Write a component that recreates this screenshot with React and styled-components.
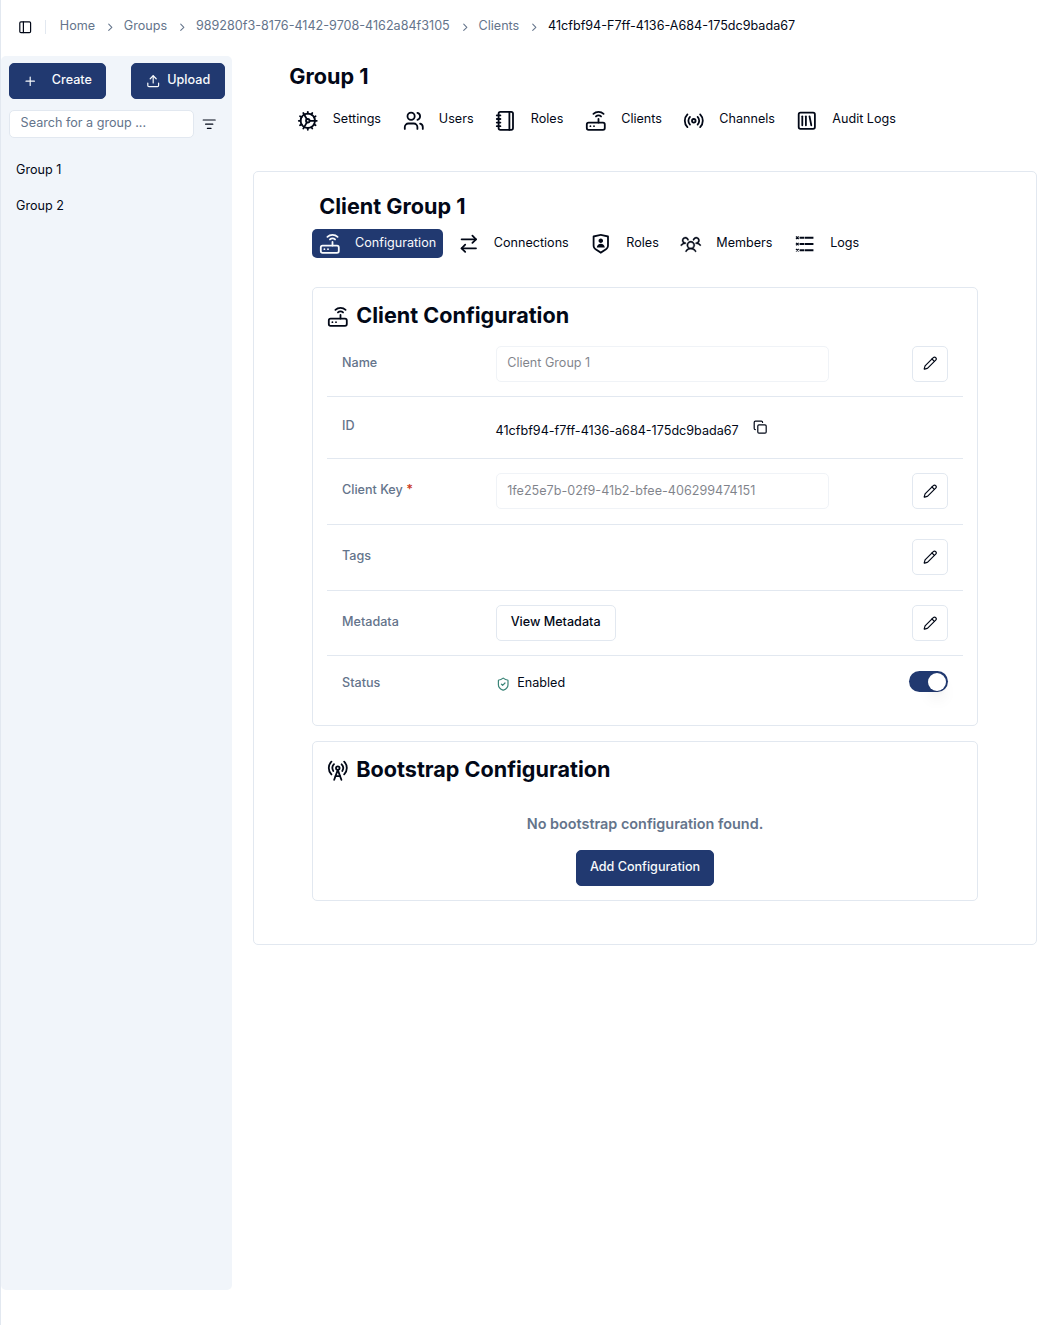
import React from "react";
import styled, { createGlobalStyle } from "styled-components";
import {
  PanelLeft, ChevronRight, Plus, Upload, ListFilter, Cog, Users, Notebook, Router, Radio,
  SquareLibrary, ArrowRightLeft, Pencil, Copy, ShieldCheck, RadioTower,
} from "lucide-react";
import { RiShieldUserLine } from "react-icons/ri";
import { PiUsersThree } from "react-icons/pi";

const Global = createGlobalStyle`
  html { font-size: 14.4px; }
  *, *::before, *::after { box-sizing: border-box; }
  body { margin: 0; background: #fff; color: #020817; font-family: Inter, "Liberation Sans", sans-serif; font-size: 12.6px; line-height: 18px; }
  button, input { font: inherit; color: inherit; }
  h1, h2 { margin: 0; }
  svg { flex-shrink: 0; }
`;

const Page = styled.div`
  min-height: 1325px;
  border-left: 1px solid #e2e8f0;
`;
const Header = styled.header`
  height: 56px;
  display: flex;
  align-items: center;
  padding: 0 0 2px 17px;
`;
const Divider = styled.span`
  width: 1px;
  height: 14px;
  margin: 0 13.4px 0 13px;
  background: #e2e8f0;
`;
const Crumbs = styled.nav`
  display: flex;
  align-items: center;
  color: #64748b;
  padding-bottom: 2px;
  svg { margin: 3px 7.3px 0 8.9px; }
`;
const Current = styled.span`
  color: #020817;
`;
const Body = styled.div`
  display: flex;
`;
const Sidebar = styled.aside`
  width: 231px;
  height: 1234px;
  padding: 7px 7px 0 8px;
  background: #f1f5fa;
  border-radius: 5px;
`;
const Actions = styled.div`
  display: flex;
  justify-content: space-between;
`;
const Button = styled.button`
  display: inline-flex;
  align-items: center;
  justify-content: center;
  width: ${(p) => p.$width}px;
  height: 36px;
  padding: 0;
  gap: ${(p) => p.$gap || 0}px;
  border: 1px solid ${(p) => (p.$outline ? "#e2e8f0" : "#213970")};
  border-radius: 5px;
  background: ${(p) => (p.$outline ? "#fff" : "#213970")};
  color: ${(p) => (p.$outline ? "#020817" : "#f8fafc")};
  font-weight: 500;
  span { padding-bottom: 2px; }
`;
const SearchRow = styled.div`
  display: flex;
  align-items: center;
  gap: 8px;
  margin-top: 11px;
`;
const Search = styled.input`
  width: 185px;
  height: 28px;
  padding: 0 10px 3px 10.6px;
  border: 1px solid #e2e8f0;
  border-radius: 5px;
  background: #fff;
  &::placeholder { color: #64748b; }
`;
const Groups = styled.div`
  display: flex;
  flex-direction: column;
  gap: 18px;
  padding: 23px 7px;
`;
const Main = styled.main`
  flex: 1;
  padding: 6px 10px 0 21px;
`;
const PageTitle = styled.h1`
  padding-left: 36.3px;
  font-size: 21.6px;
  line-height: 28px;
  font-weight: 700;
`;
const Tabs = styled.nav`
  display: flex;
  margin: 16px 0 36px 37px;
`;
const ClientTabs = styled(Tabs)`
  gap: 8px;
  margin: 9px 0 29px;
`;
const Tab = styled.a`
  display: flex;
  align-items: center;
  gap: ${(p) => p.$gap}px;
  width: ${(p) => p.$width}px;
  height: 29px;
  padding: 0 7px;
  border-radius: 5px;
  white-space: nowrap;
  color: ${(p) => (p.$active ? "#f8fafc" : "#020817")};
  background: ${(p) => (p.$active ? "#213970" : "transparent")};
  span { padding-bottom: ${(p) => p.$lift}px; }
`;
const MembersIcon = styled(PiUsersThree)`
  stroke: currentColor;
  stroke-width: 4px;
`;
const Panel = styled.section`
  height: 774px;
  padding: 20px 58px;
  border: 1px solid #e2e8f0;
  border-radius: 5px;
`;
const ClientTitle = styled(PageTitle)`
  padding-left: 7.3px;
`;
const Card = styled.section`
  height: ${(p) => p.$height}px;
  padding: 13px 14px;
  border: 1px solid #e2e8f0;
  border-radius: 5px;
  margin-bottom: 15px;
`;
const CardTitle = styled.h2`
  display: flex;
  align-items: center;
  gap: 7.7px;
  height: 29px;
  margin-bottom: 1px;
  font-size: 21.6px;
  line-height: 28px;
  font-weight: 700;
  svg { margin-top: 3px; }
  span { padding-bottom: 1px; }
`;
const Row = styled.div`
  display: grid;
  grid-template-columns: 153.6px 333px 1fr;
  align-items: center;
  height: ${(p) => p.$height}px;
  padding: 0 15px ${(p) => p.$lift || 0}px;
  border-bottom: ${(p) => (p.$last ? "0" : "1px solid #e2e8f0")};
`;
const Label = styled.div`
  color: #64748b;
  font-weight: 500;
  padding-bottom: ${(p) => p.$lift ?? 2}px;
`;
const Required = styled.span`
  color: #cb3a1c;
  font-weight: 600;
`;
const Field = styled.input`
  width: 333px;
  height: 36px;
  padding: 0 10px ${(p) => p.$lift}px 10.6px;
  border: 1px solid #e2e8f0;
  border-radius: 5px;
  background: #fff;
  opacity: 0.5;
`;
const Value = styled.div`
  display: flex;
  align-items: center;
  gap: ${(p) => p.$gap}px;
  white-space: nowrap;
`;
const IdText = styled.span`
  padding-top: 6px;
`;
const StatusText = styled.span`
  padding-bottom: 3px;
`;
const End = styled.div`
  display: flex;
  justify-content: flex-end;
`;
const Switch = styled.div`
  display: flex;
  justify-content: flex-end;
  align-items: center;
  width: 39px;
  height: 21px;
  padding: 1px 2px 0;
  margin-bottom: 6px;
  border-radius: 11px;
  background: #213970;
`;
const Thumb = styled.span`
  width: 18px;
  height: 18px;
  border-radius: 50%;
  background: #fff;
  box-shadow: 0 10px 15px -3px rgba(0, 0, 0, 0.1), 0 4px 6px -4px rgba(0, 0, 0, 0.1);
`;
const Empty = styled.div`
  display: flex;
  flex-direction: column;
  align-items: center;
  gap: 15px;
  padding-top: 28px;
`;
const EmptyText = styled.div`
  color: #64748b;
  font-size: 14.4px;
  line-height: 22px;
  font-weight: 600;
`;

const LogRows = ({ size }) => (
  <svg width={size} height={size} viewBox="0 0 24 24" fill="none" stroke="currentColor">
    {[5.3, 12.3, 19.1].map((y) => (
      <g key={y}>
        <path strokeWidth="1.4" d={`M2.2 ${y - 1.3}l3 2.6M5.2 ${y - 1.3}l-3 2.6`} />
        <path strokeWidth="2.1" d={`M6.2 ${y}h5.4M12.2 ${y}h9.4`} />
      </g>
    ))}
  </svg>
);

const groupTabs = [
  ["Settings", Cog, 106],
  ["Users", Users, 92],
  ["Roles", Notebook, 90],
  ["Clients", Router, 98, 14.6],
  ["Channels", Radio, 113, 14.7],
  ["Audit Logs", SquareLibrary, 120, 14.7],
];
const clientTabs = [
  ["Configuration", Router, 131, 14.5],
  ["Connections", ArrowRightLeft, 124],
  ["Roles", RiShieldUserLine, 82, 14.7],
  ["Members", MembersIcon, 106, 14.7],
  ["Logs", LogRows, 80, 14.6],
];
const crumbs = ["Home", "Groups", "989280f3-8176-4142-9708-4162a84f3105", "Clients"];

const TabItem = ({ item, active, lift }) => {
  const [label, Icon, width, gap = 14.2] = item;
  return (
    <Tab $width={width} $active={active} $gap={gap} $lift={lift}>
      <Icon size={21.6} />
      <span>{label}</span>
    </Tab>
  );
};
const EditButton = () => (
  <End>
    <Button $outline $width={36} aria-label="Edit"><Pencil size={14.4} /></Button>
  </End>
);

export default function App() {
  return (
    <Page>
      <Global />
      <Header>
        <PanelLeft size={14.4} />
        <Divider />
        <Crumbs>
          {crumbs.map((c) => (
            <React.Fragment key={c}>
              <span>{c}</span>
              <ChevronRight size={12.6} />
            </React.Fragment>
          ))}
          <Current>41cfbf94-F7ff-4136-A684-175dc9bada67</Current>
        </Crumbs>
      </Header>
      <Body>
        <Sidebar>
          <Actions>
            <Button $width={97} $gap={14.4}><Plus size={14.4} /><span>Create</span></Button>
            <Button $width={94} $gap={7}><Upload size={14.4} /><span>Upload</span></Button>
          </Actions>
          <SearchRow>
            <Search placeholder="Search for a group ..." />
            <ListFilter size={14.4} />
          </SearchRow>
          <Groups>
            <span>Group 1</span>
            <span>Group 2</span>
          </Groups>
        </Sidebar>
        <Main>
          <PageTitle>Group 1</PageTitle>
          <Tabs>
            {groupTabs.map((t) => <TabItem key={t[0]} item={t} lift={4} />)}
          </Tabs>
          <Panel>
            <ClientTitle>Client Group 1</ClientTitle>
            <ClientTabs>
              {clientTabs.map((t, i) => <TabItem key={t[0]} item={t} lift={2} active={i === 0} />)}
            </ClientTabs>
            <Card $height={439}>
              <CardTitle><Router size={21.6} /><span>Client Configuration</span></CardTitle>
              <Row $height={66}>
                <Label>Name</Label>
                <Field disabled value="Client Group 1" $lift={3} />
                <EditButton />
              </Row>
              <Row $height={62}>
                <Label $lift={4}>ID</Label>
                <Value $gap={14.4}>
                  <IdText>41cfbf94-f7ff-4136-a684-175dc9bada67</IdText>
                  <Copy size={14.4} />
                </Value>
              </Row>
              <Row $height={66} $lift={1}>
                <Label $lift={3}>Client Key <Required>*</Required></Label>
                <Field disabled value="1fe25e7b-02f9-41b2-bfee-406299474151" $lift={1} />
                <EditButton />
              </Row>
              <Row $height={66} $lift={1}>
                <Label $lift={3}>Tags</Label>
                <span />
                <EditButton />
              </Row>
              <Row $height={65}>
                <Label>Metadata</Label>
                <div><Button $outline $width={120}><span>View Metadata</span></Button></div>
                <EditButton />
              </Row>
              <Row $height={56} $last>
                <Label $lift={3}>Status</Label>
                <Value $gap={7.3}>
                  <ShieldCheck size={14.4} color="#3b8578" />
                  <StatusText>Enabled</StatusText>
                </Value>
                <End><Switch><Thumb /></Switch></End>
              </Row>
            </Card>
            <Card $height={160}>
              <CardTitle><RadioTower size={21.6} /><span>Bootstrap Configuration</span></CardTitle>
              <Empty>
                <EmptyText>No bootstrap configuration found.</EmptyText>
                <Button $width={138}><span>Add Configuration</span></Button>
              </Empty>
            </Card>
          </Panel>
        </Main>
      </Body>
    </Page>
  );
}
